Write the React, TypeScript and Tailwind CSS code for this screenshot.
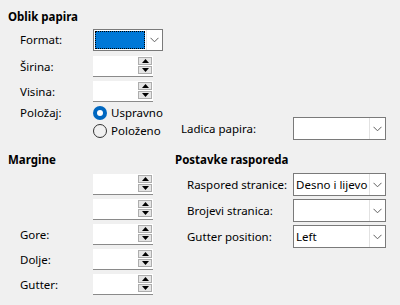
import React from "react";

const Chevron = () => (
  <svg width="9" height="6" viewBox="0 0 9 6" className="block">
    <path d="M0.5 0.8 L4.5 4.8 L8.5 0.8" fill="none" stroke="#606060" strokeWidth="1" />
  </svg>
);

const Combo = ({ w, value, selected }: { w: number; value?: string; selected?: boolean }) => (
  <div
    className="flex h-full border border-[#7a7a7a] bg-white"
    style={{ width: w }}
  >
    <div className="flex-1 flex items-center min-w-0 p-[1px] overflow-hidden">
      {selected ? (
        <div className="w-full h-full bg-[#0078d7] border border-dotted border-black" />
      ) : (
        <span className="pl-[1px] whitespace-nowrap">{value}</span>
      )}
    </div>
    <div className="w-[16px] flex items-center justify-center border-l border-[#e2e2e2] bg-white">
      <Chevron />
    </div>
  </div>
);

const Tri = ({ up }: { up?: boolean }) => (
  <svg width="7" height="4" viewBox="0 0 7 4" className="block">
    {up ? <path d="M0 4 L3.5 0 L7 4 Z" fill="#000" /> : <path d="M0 0 L3.5 4 L7 0 Z" fill="#000" />}
  </svg>
);

const Spin = () => (
  <div className="w-[60px] h-[21px] bg-white border-b border-[#8a8a8a] flex items-start justify-end pr-[1px] pt-[1px]">
    <div className="flex flex-col gap-[1px]">
      <div className="w-[14px] h-[8px] bg-[#e5e5e5] border border-[#adadad] flex items-center justify-center">
        <Tri up />
      </div>
      <div className="w-[14px] h-[8px] bg-[#e5e5e5] border border-[#adadad] flex items-center justify-center">
        <Tri />
      </div>
    </div>
  </div>
);

const Radio = ({ checked, label }: { checked?: boolean; label: string }) => (
  <div className="flex items-center gap-[4px]">
    {checked ? (
      <div className="w-[14px] h-[14px] rounded-full bg-[#0067c0] flex items-center justify-center">
        <div className="w-[6px] h-[6px] rounded-full bg-white" />
      </div>
    ) : (
      <div className="w-[14px] h-[14px] rounded-full border border-[#333] bg-[#f0f0f0]" />
    )}
    <span>{label}</span>
  </div>
);

export default function App() {
  return (
    <div
      className="w-[400px] h-[305px] bg-[#f0f0f0] text-black text-[11.5px] leading-[16px] overflow-hidden"
      style={{ fontFamily: '"Noto Sans", "Open Sans", sans-serif' }}
    >
      <div className="pl-[8px] pt-[9px] font-bold">Oblik papira</div>
      {/* Format */}
      <div className="flex items-center h-[22px] mt-[4px]">
        <div className="w-[93px] pl-[20px]">Format:</div>
        <div className="h-[22px]">
          <Combo w={70} selected />
        </div>
      </div>
      <div className="flex items-center h-[21px] mt-[5px]">
        <div className="w-[93px] pl-[20px]">Širina:</div>
        <Spin />
      </div>
      <div className="flex items-center h-[21px] mt-[4px]">
        <div className="w-[93px] pl-[20px]">Visina:</div>
        <Spin />
      </div>
      <div className="flex items-center h-[16px] mt-[3px]">
        <div className="w-[93px] pl-[20px]">Položaj:</div>
        <Radio checked label="Uspravno" />
      </div>
      <div className="flex items-start h-[23px] mt-[-4px]">
        <div className="w-[93px]" />
        <div className="mt-[6px] w-[88px]">
          <Radio label="Položeno" />
        </div>
        <div className="flex items-center h-[23px]">
          <div className="w-[112px]">Ladica papira:</div>
          <div className="h-[23px]">
            <Combo w={93} />
          </div>
        </div>
      </div>

      <div className="flex mt-[12px]">
        {/* Margins */}
        <div className="w-[167px] pl-[8px]">
          <div className="font-bold h-[16px]">Margine</div>
          <div className="flex flex-col gap-[4px] mt-[6px]">
            {["", "", "Gore:", "Dolje:", "Gutter:"].map((l, i) => (
              <div key={i} className="flex items-center h-[21px]">
                <div className="w-[85px] pl-[12px]">{l}</div>
                <Spin />
              </div>
            ))}
          </div>
        </div>
        <div className="pl-[8px]">
          <div className="font-bold h-[16px]">Postavke rasporeda</div>
          <div className="flex flex-col gap-[3px] mt-[5px]">
            {[
              ["Raspored stranice:", "Desno i lijevo"],
              ["Brojevi stranica:", ""],
              ["Gutter position:", "Left"],
            ].map(([l, v], i) => (
              <div key={i} className="flex items-center h-[23px]">
                <div className="w-[118px] pl-[12px] whitespace-nowrap">{l}</div>
                <div className="h-[23px]">
                  <Combo w={93} value={v} />
                </div>
              </div>
            ))}
          </div>
        </div>
      </div>
    </div>
  );
}
